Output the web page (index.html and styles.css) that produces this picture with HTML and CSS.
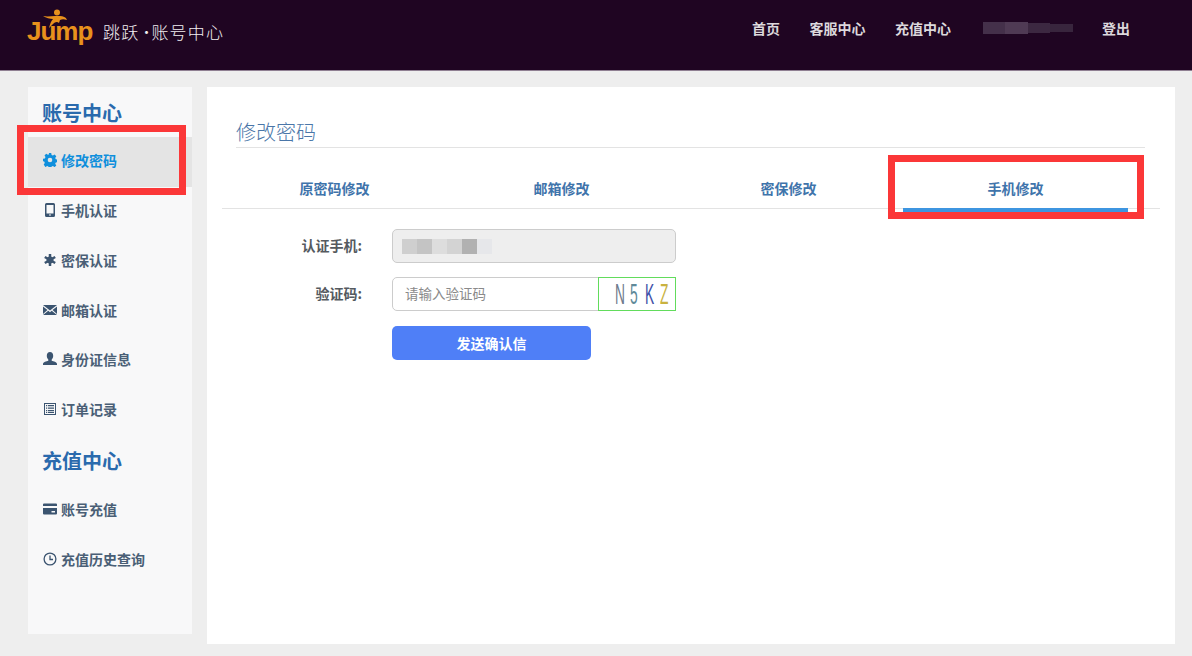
FILE: index.html
```html
<!DOCTYPE html>
<html lang="zh-CN">
<head>
  <meta charset="UTF-8">
  <title>账号中心</title>
  <link rel="stylesheet" href="styles.css">
</head>
<body>
  <header class="top-bar">
    <div class="logo">
      <span class="logo-mark">Jump
        <svg class="runner" viewBox="0 0 26 20" width="26" height="20">
          <circle cx="15" cy="3.5" r="3" fill="#e8911c"/>
          <path d="M1 7 C6 8 9 7 13 7 L18 7 C21 7 24 8 25 11 C22 10 20 10 18 11 L17 14 C15 12 13 13 11 15 L7 19 C8 15 9 12 11 10 C8 10 4 9 1 7 Z" fill="#e8911c"/>
        </svg>
      </span>
      <span class="logo-text">跳跃</span>
      <span class="logo-dot">·</span>
      <span class="logo-text">账号中心</span>
    </div>
    <nav class="top-nav">
      <a>首页</a>
      <a>客服中心</a>
      <a>充值中心</a>
      <span class="nav-blur"><i></i><i></i><i></i><i></i></span>
      <a>登出</a>
    </nav>
  </header>

  <div class="page">
    <aside class="sidebar">
      <h2>账号中心</h2>
      <a class="side-item active">
        <svg viewBox="0 0 14 14" width="14" height="14"><path d="M5.800 0h2.400l.4 2 1.300.6 1.700-1.100 1.700 1.700-1.100 1.700.6 1.300 1.900.4v2.400l-1.900.4-.6 1.300 1.100 1.700-1.700 1.700-1.700-1.100-1.300.6-.4 1.900H5.800l-.4-1.900-1.300-.6-1.700 1.100L.7 11.600l1.100-1.700-.6-1.300L0 8.200V5.800l1.900-.4.6-1.300L1.500 2.400 3.200.7l1.700 1.100 1.300-.6z" fill="#0f8fdc"/><circle cx="7" cy="7" r="2.300" fill="#e4e4e4"/></svg>
        修改密码
      </a>
      <a class="side-item">
        <svg viewBox="0 0 14 14" width="14" height="14"><path d="M3.500 0h7A1.500 1.500 0 0 1 12 1.500v11a1.500 1.500 0 0 1-1.500 1.500h-7A1.500 1.500 0 0 1 2 12.500v-11A1.500 1.500 0 0 1 3.500 0zM3.500 2v8.500h7V2zM6 11.500v1h2v-1z" fill="#3b5470" fill-rule="evenodd"/></svg>
        手机认证
      </a>
      <a class="side-item">
        <svg viewBox="0 0 14 14" width="14" height="14"><path d="M7 1v12M1.800 4l10.400 6M12.200 4L1.800 10" stroke="#3b5470" stroke-width="2.500" fill="none"/><circle cx="7" cy="7" r="3.500" fill="#3b5470"/></svg>
        密保认证
      </a>
      <a class="side-item">
        <svg viewBox="0 0 14 14" width="14" height="14"><path d="M0 2h14L7 7.500zM0 3.500l4.500 3.600L0 11zM14 3.500v7.500L9.500 7.100zM5.300 7.800L7 9.200l1.700-1.400L14 12H0z" fill="#3b5470"/></svg>
        邮箱认证
      </a>
      <a class="side-item">
        <svg viewBox="0 0 14 14" width="14" height="14"><path d="M7 0c2 0 3.200 1.600 3.200 3.700 0 1.600-.7 3-1.500 3.800v1.200c1.800.6 5.300 1.300 5.300 3.300v1H0v-1c0-2 3.500-2.700 5.300-3.300V7.500C4.500 6.700 3.800 5.300 3.800 3.700 3.800 1.600 5 0 7 0z" fill="#3b5470"/></svg>
        身份证信息
      </a>
      <a class="side-item">
        <svg viewBox="0 0 14 14" width="14" height="14"><path d="M1 1h12v12H1zM2 2v10h10V2zM3 3h1.200v1.300H3zM3 5.500h1.200v1.300H3zM3 8h1.200v1.300H3zM3 10h1.200v1H3zM5 3h6v1.300H5zM5 5.500h6v1.300H5zM5 8h6v1.300H5zM5 10h6v1H5z" fill="#3b5470" fill-rule="evenodd"/></svg>
        订单记录
      </a>
      <h2>充值中心</h2>
      <a class="side-item">
        <svg viewBox="0 0 14 14" width="14" height="14"><path d="M1 1.500h12a1 1 0 0 1 1 1V4H0V2.500a1 1 0 0 1 1-1zM0 6h14v5.500a1 1 0 0 1-1 1H1a1 1 0 0 1-1-1zM8.500 9v1.500h3.500V9z" fill="#3b5470" fill-rule="evenodd"/></svg>
        账号充值
      </a>
      <a class="side-item">
        <svg viewBox="0 0 14 14" width="14" height="14"><circle cx="7" cy="7" r="5.900" fill="none" stroke="#3b5470" stroke-width="1.300"/><path d="M7 3.500V7.500H10" fill="none" stroke="#3b5470" stroke-width="1.300"/></svg>
        充值历史查询
      </a>
    </aside>

    <main class="panel">
      <h1 class="panel-title">修改密码</h1>
      <ul class="tabs">
        <li>原密码修改</li>
        <li>邮箱修改</li>
        <li>密保修改</li>
        <li class="current">手机修改</li>
      </ul>
      <form class="form">
        <div class="form-row">
          <label>认证手机:</label>
          <div class="phone-box"><i></i><i></i><i></i><i></i><i></i><i></i></div>
        </div>
        <div class="form-row">
          <label>验证码:</label>
          <div class="code-group">
            <input type="text" placeholder="请输入验证码">
            <div class="captcha"><span class="c1">N</span><span class="c2">5</span><span class="c3">K</span><span class="c4">Z</span></div>
          </div>
        </div>
        <button type="button" class="send-btn">发送确认信</button>
      </form>
    </main>
  </div>

  <div class="mark mark-side"></div>
  <div class="mark mark-tab"></div>
</body>
</html>
```

FILE: styles.css
```css
/* General */
body {
  margin: 0;
  height: 656px;
  overflow: hidden;
  background: #eeeeee;
  font-family: "Noto Sans CJK SC", "Liberation Sans", sans-serif;
  position: relative;
}

/* Top bar */
.top-bar {
  height: 70px;
  background: #1f0522;
  border-bottom: 1px solid #8f7f92;
  display: flex;
  justify-content: space-between;
}

.logo {
  display: flex;
  align-items: center;
  padding: 0 0 8px 27px;
}

.logo-mark {
  position: relative;
  width: 76px;
  font-family: "Liberation Sans", sans-serif;
  font-size: 26px;
  font-weight: bold;
  letter-spacing: -1px;
  color: #e8911c;
}

.runner {
  position: absolute;
  left: 15px;
  top: -7px;
}

.logo-text {
  color: #f1eef1;
  font-size: 17px;
  font-weight: 300;
  letter-spacing: 1.2px;
}

.logo-dot {
  width: 12px;
  text-align: center;
  color: #f1eef1;
  font-size: 14px;
}

.top-nav {
  display: flex;
  align-items: center;
  gap: 29.5px;
  padding: 0 62px 15px 0;
  color: #dcd8dc;
  font-size: 14px;
  font-weight: bold;
}

.nav-blur {
  display: flex;
  align-items: center;
  width: 90px;
  height: 14px;
  margin-left: 2px;
}

.nav-blur i {
  display: block;
  height: 12px;
  flex: 1;
  background: #44304a;
}

.nav-blur i:nth-child(2) { background: #4f3a54; }
.nav-blur i:nth-child(3) { background: #3c2841; height: 10px; }
.nav-blur i:nth-child(4) { background: #38253d; height: 8px; }

/* Page */
.page {
  display: flex;
  align-items: flex-start;
  gap: 15px;
  padding: 16px 17px 0 28px;
}

/* Sidebar */
.sidebar {
  width: 164px;
  height: 547px;
  flex: none;
  background: #f8f8f9;
}

.sidebar h2 {
  margin: 0;
  height: 50px;
  padding: 1px 0 0 14px;
  box-sizing: border-box;
  display: flex;
  align-items: center;
  font-size: 20px;
  font-weight: bold;
  color: #2a6aad;
}

.sidebar .side-item + h2 {
  padding-top: 0;
}

.side-item {
  height: 49.75px;
  box-sizing: border-box;
  padding: 0 0 3px 15px;
  display: flex;
  align-items: center;
  gap: 4px;
  font-size: 14px;
  font-weight: bold;
  color: #4a5f76;
}

.side-item.active {
  background: #e4e4e4;
  color: #0f8fdc;
}

/* Main panel */
.panel {
  flex: 1;
  height: 557px;
  background: #ffffff;
  padding: 0 15px;
  box-sizing: border-box;
}

.panel-title {
  margin: 0 15px 0 14px;
  height: 61px;
  padding-top: 30px;
  box-sizing: border-box;
  border-bottom: 1px solid #e3e3e3;
  font-size: 20px;
  line-height: 29px;
  font-weight: 300;
  color: #4a76a8;
}

.tabs {
  list-style: none;
  margin: 0;
  padding: 0;
  height: 61px;
  display: flex;
  border-bottom: 1px solid #e3e3e3;
  box-sizing: border-box;
}

.tabs li {
  width: 227px;
  padding: 29px 2px 0 0;
  box-sizing: border-box;
  text-align: center;
  font-size: 14px;
  line-height: 22px;
  font-weight: bold;
  color: #3f74ab;
}

.tabs li.current {
  height: 64px;
  width: 225px;
  padding-right: 0;
  border-bottom: 4px solid #3d95e0;
}

/* Form */
.form {
  padding-top: 20px;
}

.form-row {
  display: flex;
  align-items: center;
  gap: 30px;
  height: 34px;
  margin-bottom: 15px;
}

.form-row:first-child {
  margin-bottom: 14px;
}

.form-row label {
  width: 140px;
  padding-bottom: 2px;
  text-align: right;
  font-size: 14px;
  font-weight: bold;
  color: #555a60;
}

.phone-box {
  width: 284px;
  height: 34px;
  box-sizing: border-box;
  display: flex;
  align-items: center;
  padding-left: 9px;
  background: #eeeeee;
  border: 1px solid #cccccc;
  border-radius: 5px;
}

.phone-box i {
  display: block;
  width: 15px;
  height: 15px;
  background: #cfcfcf;
}

.phone-box i:nth-child(2) { background: #c4c4c4; }
.phone-box i:nth-child(3) { background: #dddddd; }
.phone-box i:nth-child(4) { background: #d3d3d3; }
.phone-box i:nth-child(5) { background: #b1b1b1; }
.phone-box i:nth-child(6) { background: #e6e7ea; }

.code-group {
  display: flex;
  width: 284px;
  height: 34px;
}

.code-group input {
  width: 207px;
  margin-right: -1px;
  box-sizing: border-box;
  padding: 0 12px 2px;
  border: 1px solid #cccccc;
  border-radius: 5px 0 0 5px;
  font-family: inherit;
  font-size: 13.5px;
  outline: none;
}

.code-group input::placeholder {
  color: #8a8a8a;
}

.captcha {
  width: 78px;
  height: 34px;
  box-sizing: border-box;
  display: flex;
  align-items: center;
  padding-left: 12px;
  background: #ffffff;
  border: 1px solid #62dc5c;
  font-family: "Liberation Sans", sans-serif;
  font-size: 30px;
  line-height: 1;
}

.captcha span {
  display: block;
  width: 15px;
  text-align: center;
  transform: scaleX(0.46);
}

.captcha .c1 { color: #6e7a8c; }
.captcha .c2 { color: #5f8a99; }
.captcha .c3 { color: #3f4fa8; }
.captcha .c4 { color: #c9b23f; }

.send-btn {
  display: block;
  width: 199px;
  height: 34px;
  margin-left: 170px;
  padding-bottom: 2px;
  border: none;
  border-radius: 5px;
  background: #4f7ff7;
  color: #ffffff;
  font-family: inherit;
  font-size: 14px;
  font-weight: bold;
}

/* Red annotation frames */
.mark {
  position: absolute;
  box-sizing: border-box;
  border: 7px solid #fb3738;
}

.mark-side {
  left: 17px;
  top: 125px;
  width: 169px;
  height: 70px;
}

.mark-tab {
  left: 888px;
  top: 155px;
  width: 256px;
  height: 64px;
}
```
